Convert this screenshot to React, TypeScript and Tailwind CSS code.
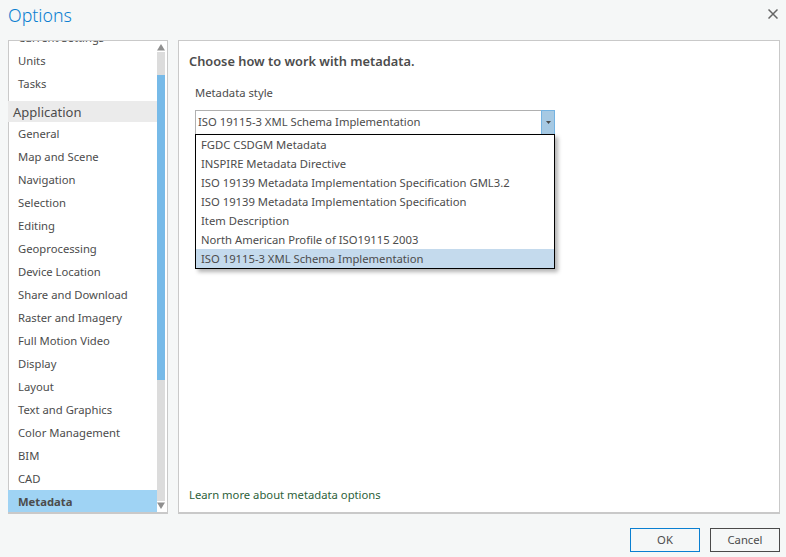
import React from 'react'

const topItems = ['Current Settings', 'Units', 'Tasks']
const appItems = ['General', 'Map and Scene', 'Navigation', 'Selection', 'Editing', 'Geoprocessing', 'Device Location', 'Share and Download', 'Raster and Imagery', 'Full Motion Video', 'Display', 'Layout', 'Text and Graphics', 'Color Management', 'BIM', 'CAD']
const styles = ['FGDC CSDGM Metadata', 'INSPIRE Metadata Directive', 'ISO 19139 Metadata Implementation Specification GML3.2', 'ISO 19139 Metadata Implementation Specification', 'Item Description', 'North American Profile of ISO19115 2003']

const App = () => {
  return (
    <div className="w-[786px] h-[557px] flex flex-col overflow-hidden bg-[#f5f7f7] text-[#4c4c4c] text-[11.25px] font-['Noto_Sans',sans-serif]">
      <header className="h-[40px] shrink-0 flex justify-between pl-[8px] pr-[8px]">
        <h1 className="text-[17.75px] leading-[30px] font-light text-[#0a7fd1]">Options</h1>
        <svg width="10" height="10" viewBox="0 0 10 10" className="mt-[9px] text-[#666]">
          <path d="M0.5 0.5 9.5 9.5M9.5 0.5 0.5 9.5" stroke="currentColor" strokeWidth="1.5" />
        </svg>
      </header>

      <div className="h-[474px] shrink-0 flex gap-[10px] pl-[8px] pr-[6px]">
        <aside className="w-[160px] shrink-0 flex bg-white border-t border-r border-b-2 border-[#c9c9c9] overflow-hidden">
          <ul className="w-[149px] shrink-0 -mt-[15px] border-l border-[#c9c9c9]">
            {topItems.map((item) => (
              <li key={item} className="h-[23px] pl-[9px] leading-[23px]">{item}</li>
            ))}
            <li className="h-[21px] mt-[6px] -ml-px pl-[5px] bg-[#ebebeb] text-[13px] leading-[23px]">Application</li>
            {appItems.map((item) => (
              <li key={item} className="h-[23px] pl-[9px] leading-[23px]">{item}</li>
            ))}
            <li className="h-[23px] -ml-px pl-[10px] leading-[23px] bg-[#9fd3f4] font-bold">Metadata</li>
          </ul>
          <div className="w-[8px] shrink-0 flex flex-col items-center">
            <svg width="8" height="11" viewBox="0 0 8 11" className="shrink-0">
              <path d="M4 3 8 9.5H0Z" fill="#8f8f8f" />
            </svg>
            <div className="w-full h-[23px] bg-[#dcdcdc]" />
            <div className="w-full h-[305px] bg-[#77bae8]" />
            <div className="w-full flex-1 bg-[#dcdcdc]" />
            <svg width="8" height="11" viewBox="0 0 8 11" className="shrink-0">
              <path d="M0 1.5H8L4 8Z" fill="#8f8f8f" />
            </svg>
          </div>
        </aside>

        <main className="relative flex-1 flex flex-col bg-white border border-t-[#c9c9c9] border-x-[#c9c9c9] border-b-2 border-b-[#c9c9c9] pl-[10px] pb-[8px]">
          <h2 className="mt-[11px] text-[12.8px] leading-[18px] font-semibold">Choose how to work with metadata.</h2>
          <label className="mt-[14px] ml-[6px] leading-[18px]">Metadata style</label>
          <div className="relative mt-[8px] ml-[6px] w-[360px] h-[25px] flex border border-[#b0b0b0] border-b-black">
            <span className="flex-1 pl-[2px] leading-[22px]">ISO 19115-3 XML Schema Implementation</span>
            <div className="w-[14px] -my-px -mr-px shrink-0 flex items-center justify-center bg-[#a6c9e3] border border-[#74b3e2]">
              <svg width="5" height="3" viewBox="0 0 5 3"><path d="M0 0H5L2.5 3Z" fill="#4c4c4c" /></svg>
            </div>
            <ul className="absolute left-[-1px] top-[23px] w-[360px] h-[135px] bg-white border border-black shadow-[3px_3px_4px_rgba(0,0,0,0.3)] z-10">
              {styles.map((item) => (
                <li key={item} className="h-[19px] pl-[5px] leading-[19px]">{item}</li>
              ))}
              <li className="h-[19px] pl-[5px] leading-[19px] bg-[#c4daed]">ISO 19115-3 XML Schema Implementation</li>
            </ul>
          </div>
          <a className="mt-auto leading-[18px] text-[#2d5f3a]">Learn more about metadata options</a>
        </main>
      </div>

      <footer className="flex justify-end gap-[10px] pt-[14px] pr-[6px]">
        <button className="w-[70px] h-[24px] border border-[#0a7fd1] text-[#4c4c4c]">OK</button>
        <button className="w-[70px] h-[24px] border border-[#4a4a4a] text-[#4c4c4c]">Cancel</button>
      </footer>
    </div>
  )
}

export default App
